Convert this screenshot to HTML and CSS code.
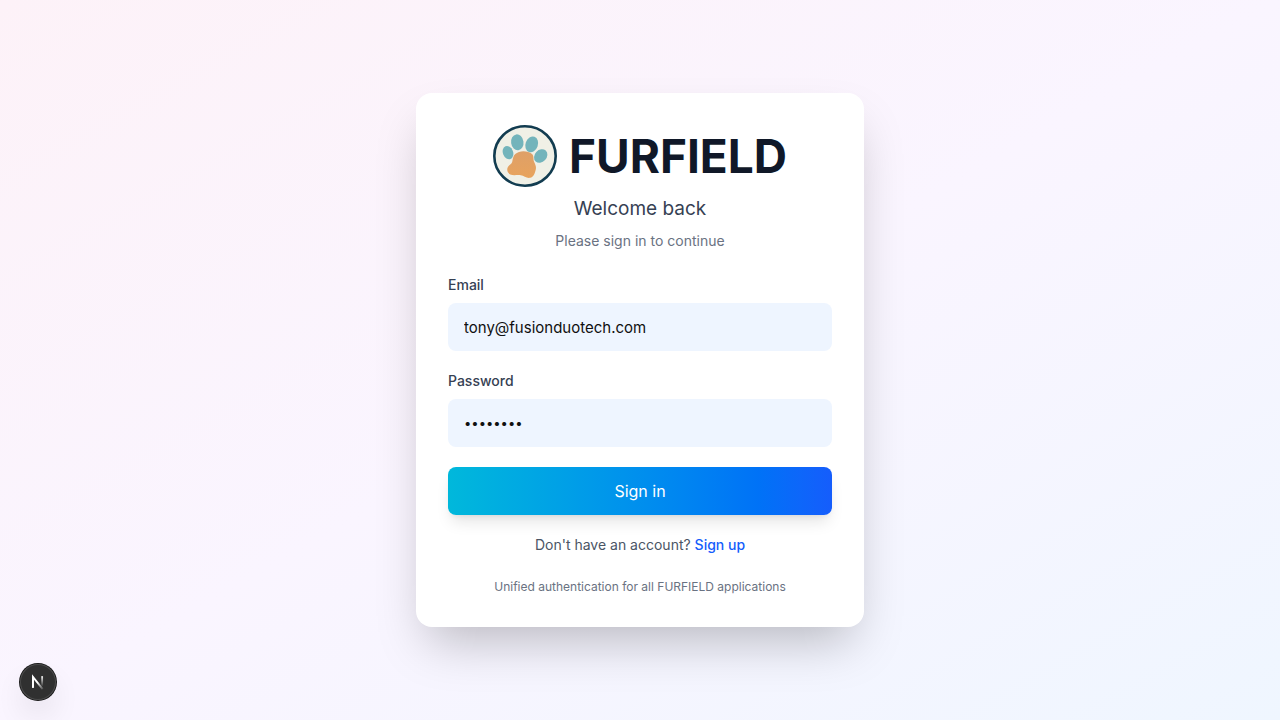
FILE: index.html
```html
<!DOCTYPE html>
<html lang="en">
<head>
<meta charset="utf-8">
<meta name="viewport" content="width=device-width, initial-scale=1">
<title>FURFIELD – Sign in</title>
<link rel="stylesheet" href="styles.css">
</head>
<body>
<main class="page">
  <section class="card">
    <header class="intro">
      <div class="brand">
        <svg class="logo" viewBox="0 0 64 62" aria-hidden="true">
          <defs>
            <linearGradient id="pad" x1="0" y1="0" x2="0" y2="1">
              <stop offset="0" stop-color="#dea068"/>
              <stop offset="1" stop-color="#e8a35c"/>
            </linearGradient>
          </defs>
          <ellipse cx="32" cy="31" rx="30.7" ry="29.7" fill="#f0f0e6" stroke="#123c50" stroke-width="2.6"/>
          <g fill="#73b4bb">
            <ellipse cx="15" cy="27.6" rx="5.1" ry="6.8" transform="rotate(-22 15 27.6)"/>
            <ellipse cx="24.3" cy="17.3" rx="6.2" ry="8" transform="rotate(-8 24.3 17.3)"/>
            <ellipse cx="38.7" cy="19.4" rx="6.2" ry="8.1" transform="rotate(20 38.7 19.4)"/>
            <ellipse cx="47.7" cy="31" rx="6" ry="7.4" transform="rotate(43 47.7 31)"/>
          </g>
          <path d="M26 27C30 25.6 36 26.4 39 28.9C41.3 31 39.9 34.1 41.2 37C42.4 39.8 43.6 42 42.6 45.2C41.7 48.5 40.6 52 37.2 52.8C33.5 53.6 31 50.6 27.8 50.2C24 49.6 20.6 50.9 17.2 49.4C14.3 48 13.5 44.5 14.9 41.9C16.1 39.8 18.4 39.2 19.2 36.9C20.1 34.3 19.4 29 26 27Z" fill="url(#pad)"/>
        </svg>
        <h1 class="name">FURFIELD</h1>
      </div>
      <h2 class="welcome">Welcome back</h2>
      <p class="hint">Please sign in to continue</p>
    </header>
    <form class="form">
      <div class="field">
        <label class="label" for="email">Email</label>
        <input class="input" id="email" type="email" value="tony@fusionduotech.com">
      </div>
      <div class="field">
        <label class="label" for="password">Password</label>
        <input class="input input-password" id="password" type="password" value="password">
      </div>
      <button class="submit" type="submit">Sign in</button>
    </form>
    <p class="signup">Don't have an account? <a class="link" href="#">Sign up</a></p>
    <p class="note">Unified authentication for all FURFIELD applications</p>
  </section>
</main>
<button class="devtools" type="button" aria-label="Open developer tools">
  <svg class="devtools-icon" viewBox="0 0 40 40" fill="none" aria-hidden="true">
    <defs>
      <linearGradient id="stem" x1="0" y1="13" x2="0" y2="25" gradientUnits="userSpaceOnUse">
        <stop offset="0" stop-color="#fff"/>
        <stop offset="1" stop-color="#fff" stop-opacity="0"/>
      </linearGradient>
      <linearGradient id="slash" x1="20" y1="20" x2="26" y2="28" gradientUnits="userSpaceOnUse">
        <stop offset="0" stop-color="#fff"/>
        <stop offset="1" stop-color="#fff" stop-opacity="0.1"/>
      </linearGradient>
    </defs>
    <path d="M14.4 26.4V14.3L25.2 28" stroke="url(#slash)" stroke-width="2.1"/>
    <path d="M14.4 26.4V14.3" stroke="#fff" stroke-width="2.1"/>
    <path d="M24.6 13.5V25.5" stroke="url(#stem)" stroke-width="2"/>
  </svg>
</button>
</body>
</html>
```
FILE: styles.css
```css
* {
  box-sizing: border-box;
}

body,
h1,
h2,
p {
  margin: 0;
}

body {
  font-family: Inter, "Liberation Sans", sans-serif;
  font-size: 16px;
  line-height: 24px;
}

.page {
  display: flex;
  align-items: center;
  justify-content: center;
  min-height: 100vh;
  padding: 16px;
  background: linear-gradient(to bottom right in oklab, #fdf2f8, #faf5ff, #eff6ff);
}

.card {
  width: 100%;
  max-width: 448px;
  padding: 32px;
  border-radius: 16px;
  background: #fff;
  box-shadow: 0 25px 50px -12px rgb(0 0 0 / 25%);
}

.intro {
  margin-bottom: 24px;
  text-align: center;
}

.brand {
  display: flex;
  align-items: center;
  justify-content: center;
  gap: 12px;
  margin-bottom: 8px;
}

.logo {
  width: 64px;
  height: 62px;
}

.name {
  color: #101828;
  font-size: 46px;
  font-weight: 700;
  line-height: 48px;
}

.welcome {
  margin-bottom: 8px;
  color: #364153;
  font-size: 19px;
  font-weight: 400;
  line-height: 28px;
}

.hint {
  color: #6a7282;
  font-size: 14px;
  line-height: 20px;
}

.form {
  display: grid;
  gap: 20px;
}

.field {
  display: grid;
  gap: 8px;
}

.label {
  color: #364153;
  font-size: 14px;
  font-weight: 500;
  line-height: 20px;
}

.input {
  width: 100%;
  height: 48px;
  padding: 12px 16px;
  border: 0;
  border-radius: 8px;
  background: #eef5ff;
  color: #101010;
  font: inherit;
  font-size: 15px;
}

.input-password {
  font-size: 13px;
}

.submit {
  padding: 12px 24px;
  border: 0;
  border-radius: 8px;
  background: linear-gradient(to right in oklab, #00b8db, #155dfc);
  box-shadow: 0 10px 15px -3px rgb(0 0 0 / 10%), 0 4px 6px -4px rgb(0 0 0 / 10%);
  color: #fff;
  font: inherit;
}

.signup {
  margin-top: 20px;
  color: #4a5565;
  font-size: 14px;
  line-height: 20px;
  text-align: center;
}

.link {
  color: #155dfc;
  font-weight: 500;
  text-decoration: none;
}

.note {
  margin-top: 24px;
  color: #6a7282;
  font-size: 12px;
  line-height: 16px;
  text-align: center;
}

.devtools {
  position: fixed;
  bottom: 20px;
  left: 20px;
  width: 36px;
  height: 36px;
  padding: 0;
  border: 0;
  border-radius: 50%;
  background: #303030;
  box-shadow: 0 0 0 1px #171717, inset 0 0 0 1px #4b4b4b, 0 16px 32px -8px rgb(0 0 0 / 24%);
}

.devtools-icon {
  display: block;
  width: 36px;
  height: 36px;
}
```
